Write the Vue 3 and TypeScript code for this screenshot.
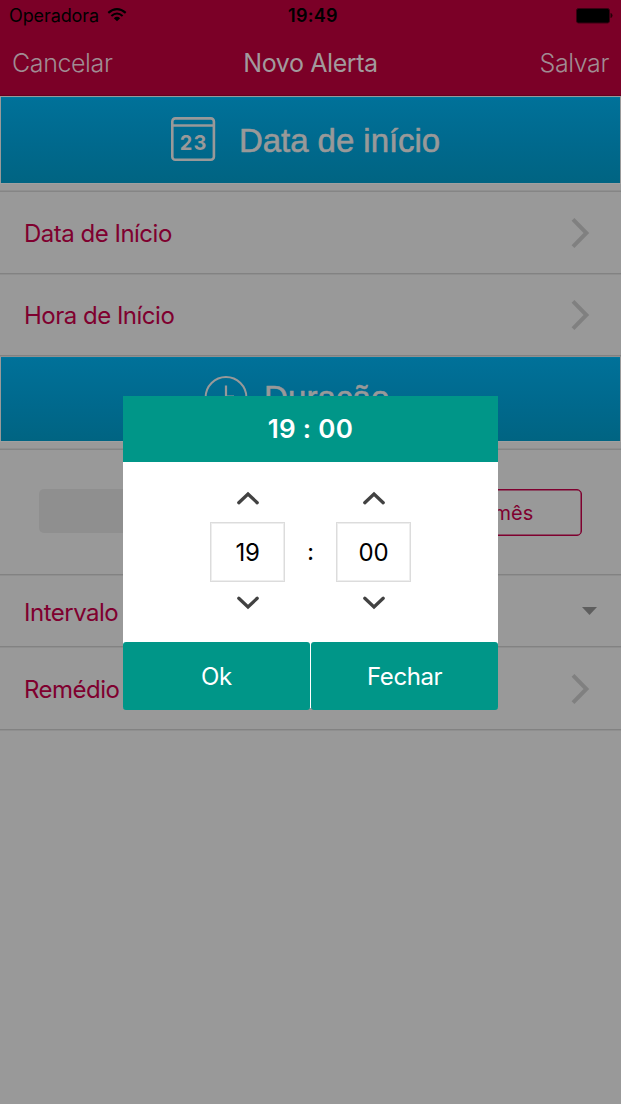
<script setup lang="ts">
import { ref, computed } from 'vue'

const hour = ref(19)
const minute = ref(0)
const pad = (n: number): string => String(n).padStart(2, '0')

const fields = computed(() => [
  { key: 'hour', value: pad(hour.value) },
  { key: 'minute', value: pad(minute.value) },
])

function step(key: string, delta: number): void {
  if (key === 'hour') hour.value = (hour.value + delta + 24) % 24
  else minute.value = (minute.value + delta + 60) % 60
}
</script>

<template>
  <div class="screen">
    <header class="top">
      <div class="status">
        <span class="carrier">Operadora</span>
        <svg class="wifi" width="20" height="14" viewBox="0 0 20 14">
          <path d="M1.3 4.9Q10-2.7 18.7 4.9M4.4 8Q10 3 15.6 8" fill="none" stroke="#000" stroke-width="2.1" />
          <path d="M6.8 10.2Q10 7.4 13.2 10.2L10 13.3Z" />
        </svg>
        <span class="clock">19:49</span>
        <svg class="battery" width="38" height="16" viewBox="0 0 38 16">
          <rect x="1.5" y=".5" width="33" height="14.5" rx="2" fill="#000" stroke="#380012" />
          <path d="M35.5 5q2 .4 2 2.5t-2 2.5z" fill="#240009" />
        </svg>
      </div>
      <nav class="nav">
        <span class="cancel">Cancelar</span>
        <span class="title">Novo Alerta</span>
        <span class="save">Salvar</span>
      </nav>
    </header>

    <section class="banner first">
      <svg class="calendar" width="45" height="45" viewBox="0 0 45 45">
        <rect x="1.3" y="1.4" width="41.6" height="41.4" rx="3" fill="none" stroke="#999" stroke-width="2.6" />
        <path d="M2 8.5H43" stroke="#999" stroke-width="2.3" />
        <text x="22.7" y="32.5" text-anchor="middle">23</text>
      </svg>
      <span class="banner-text">Data de início</span>
    </section>
    <div class="gap"></div>
    <div class="row date">
      <span class="label">Data de Início</span>
      <svg class="chevron" width="20" height="32" viewBox="0 0 20 32"><path d="M2 2.4 15.4 16 2 29.6" /></svg>
    </div>
    <div class="row time">
      <span class="label">Hora de Início</span>
      <svg class="chevron" width="20" height="32" viewBox="0 0 20 32"><path d="M2 2.4 15.4 16 2 29.6" /></svg>
    </div>
    <section class="banner second">
      <svg class="watch" width="44" height="44" viewBox="0 0 44 44" fill="none" stroke="#999">
        <circle cx="22" cy="21.5" r="20.4" stroke-width="2" />
        <path d="M22 9.5V20.5H30" stroke-width="2.2" />
      </svg>
      <span class="banner-text">Duração</span>
    </section>
    <div class="gap"></div>
    <div class="row options">
      <div class="option muted"></div>
      <div class="option outlined">1 mês</div>
    </div>
    <div class="row interval">
      <span class="label">Intervalo</span>
      <svg class="caret" width="15" height="8" viewBox="0 0 15 8"><path d="M0 0H15L7.5 8Z" fill="#5e5e5e" /></svg>
    </div>
    <div class="row medicine">
      <span class="label">Remédio</span>
      <svg class="chevron" width="20" height="32" viewBox="0 0 20 32"><path d="M2 2.4 15.4 16 2 29.6" /></svg>
    </div>

    <div class="dialog">
      <div class="dialog-head"><span>{{ pad(hour) }} : {{ pad(minute) }}</span></div>
      <div class="picker">
        <template v-for="(f, i) in fields" :key="f.key">
          <span v-if="i" class="colon">:</span>
          <div class="spinner">
            <svg class="arrow" width="24" height="14" viewBox="0 0 24 14" @click="step(f.key, 1)"><path d="M2.8 11.7 12 3 21.2 11.7" /></svg>
            <div class="value">{{ f.value }}</div>
            <svg class="arrow" width="24" height="14" viewBox="0 0 24 14" @click="step(f.key, -1)"><path d="M2.8 2.3 12 11 21.2 2.3" /></svg>
          </div>
        </template>
      </div>
      <div class="actions">
        <button class="ok">Ok</button>
        <button class="close">Fechar</button>
      </div>
    </div>
  </div>
</template>

<style>
body { margin: 0; background: #999; }
</style>

<style scoped>
* { box-sizing: border-box; }
.screen {
  position: relative; width: 621px; height: 1104px; overflow: hidden;
  background: #999; font-family: Inter, "Liberation Sans", sans-serif; color: #7f002f;
}
svg { display: block; flex: none; }
span { white-space: nowrap; }
.top { height: 96px; background: #7b0027; border-bottom: 1px solid #62001f; }
.status {
  height: 32px; padding: 0 8px 0 9px; display: grid;
  grid-template-columns: 98px 181px auto 1fr; align-items: center;
  color: #000; font-size: 18px; line-height: 32px;
}
.carrier { letter-spacing: -.1px; }
.wifi { margin-top: -3px; }
.clock { font-weight: 600; font-size: 18px; letter-spacing: .3px; }
.battery { justify-self: end; }
.nav {
  height: 62px; padding: 0 12px; display: grid; grid-template-columns: 1fr auto 1fr;
  align-items: center; font-size: 25px; line-height: 30px; color: #a08c93; letter-spacing: -.4px;
}
.cancel, .save { font-weight: 300; }
.save { justify-self: end; }
.title { font-weight: 400; color: #a29a9d; }
.banner {
  margin: 0 1px; display: flex; color: #999;
  background: linear-gradient(#007199, #00698d 55%, #006482);
  border-top: 1px solid #00779f;
}
.first { margin-top: 1px; height: 86px; padding: 19px 0 0 170px; }
.second { height: 84px; padding: 18px 0 0 203px; }
.calendar text { font: 700 20px Inter, sans-serif; fill: #999; letter-spacing: 1.2px; }
.banner-text { font: 400 33px/48px "Liberation Sans", sans-serif; letter-spacing: -.05px; -webkit-text-stroke: .6px #999; }
.first .banner-text { margin-left: 23px; }
.second .banner-text { margin-left: 16px; line-height: 43px; letter-spacing: .1px; }
.gap { height: 9px; border-top: 1px solid #a0a0a0; border-bottom: 1px solid #858585; box-shadow: inset 0 -1px #8f8f8f; }
.row { display: flex; align-items: center; justify-content: space-between; padding: 0 30px 0 24px; border-bottom: 1px solid #8f8f8f; box-shadow: inset 0 -1px #828282; }
.date { height: 83px; }
.time { height: 82px; padding-bottom: 1px; }
.label { font-size: 24px; line-height: 32px; letter-spacing: -.5px; padding-top: 2px; }
.chevron path { fill: none; stroke: #808080; stroke-width: 4; }
.options { height: 126px; padding: 0 39px; }
.option { height: 44px; width: 260px; border-radius: 5px; }
.muted { background: #8f8f8f; margin-top: -3px; }
.outlined { height: 47px; width: 153px; border: 1px solid #7f002f; box-shadow: inset 0 0 0 .5px #7f002f; font-size: 20px; line-height: 46px; text-align: center; padding-left: 2px; }
.interval { height: 72px; padding: 0 24px 2px; }
.interval .label { padding-top: 4px; }
.medicine { height: 83px; }
.dialog { position: absolute; left: 123px; top: 396px; width: 375px; height: 314px; background: linear-gradient(#fff 312px, transparent 312px); }
.dialog-head {
  height: 66px; padding-bottom: 2px; background: #009688; color: #fff; display: flex;
  align-items: center; justify-content: center; font-size: 26px; font-weight: 600; letter-spacing: .3px;
}
.picker { height: 180px; padding-top: 29px; display: flex; justify-content: center; color: #000; }
.spinner { width: 75px; display: flex; flex-direction: column; align-items: center; }
.value {
  width: 75px; height: 60px; margin: 17px 0 14px; border: 1px solid #dcdcdc; box-shadow: inset 0 0 0 1px #eee;
  font-size: 24px; line-height: 60px; text-align: center; letter-spacing: -.2px;
}
.colon { width: 51px; padding-top: 45px; text-align: center; font-size: 22px; font-weight: 500; line-height: 32px; }
.arrow path { fill: none; stroke: #424242; stroke-width: 3.3; stroke-linecap: round; }
.actions { display: flex; gap: 1.5px; height: 68px; }
button {
  flex: 1; height: 67.5px; border: 0; padding: 1px 0 0; border-radius: 3px; background: #009688;
  color: #fff; font: 400 24px Inter, sans-serif; letter-spacing: -.4px;
}
</style>
